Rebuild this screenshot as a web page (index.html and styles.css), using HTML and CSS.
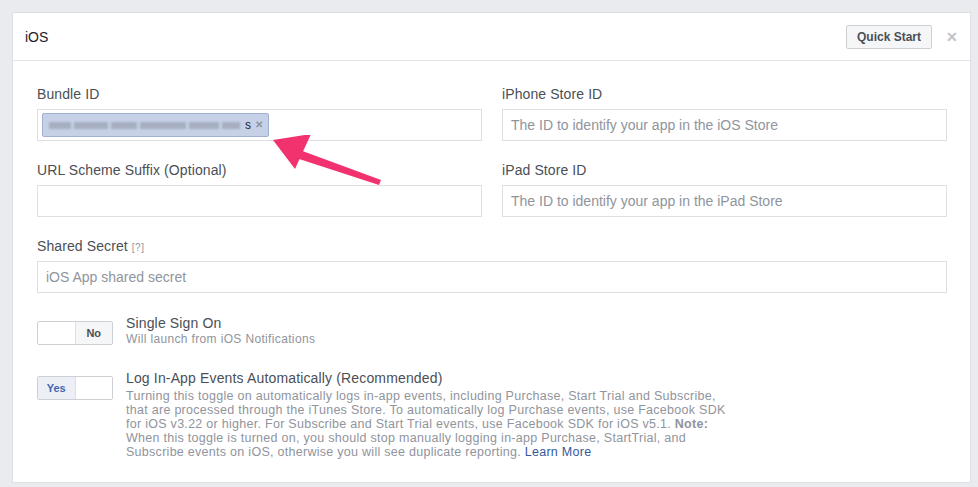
FILE: index.html
```html
<!DOCTYPE html>
<html>
<head>
<meta charset="utf-8">
<link rel="stylesheet" href="styles.css">
</head>
<body>
<div class="card">
  <div class="card-header">
    <span class="title">iOS</span>
    <div class="header-actions">
      <button class="btn">Quick Start</button>
      <span class="close">&#x2715;</span>
    </div>
  </div>
  <div class="card-body">
    <div class="grid">
      <div class="field">
        <label class="label">Bundle ID</label>
        <div class="input token-input">
          <span class="token">
            <span class="blur">
              <i class="b1"></i><i class="b2"></i><i class="b3"></i><i class="b4"></i><i class="b5"></i><i class="b6"></i>
            </span>
            <span class="token-s">s</span>
            <span class="token-x">&#x2715;</span>
          </span>
        </div>
      </div>
      <div class="field">
        <label class="label">iPhone Store ID</label>
        <div class="input placeholder">The ID to identify your app in the iOS Store</div>
      </div>
      <div class="field">
        <label class="label">URL Scheme Suffix (Optional)</label>
        <div class="input"></div>
      </div>
      <div class="field">
        <label class="label">iPad Store ID</label>
        <div class="input placeholder">The ID to identify your app in the iPad Store</div>
      </div>
      <div class="field wide">
        <label class="label">Shared Secret <span class="help">[?]</span></label>
        <div class="input placeholder">iOS App shared secret</div>
      </div>
    </div>

    <div class="option first">
      <div class="toggle">
        <span class="half"></span>
        <span class="half off">No</span>
      </div>
      <div class="option-text">
        <div class="option-title">Single Sign On</div>
        <div class="option-desc">Will launch from iOS Notifications</div>
      </div>
    </div>

    <div class="option">
      <div class="toggle">
        <span class="half on">Yes</span>
        <span class="half"></span>
      </div>
      <div class="option-text">
        <div class="option-title">Log In-App Events Automatically (Recommended)</div>
        <div class="option-desc long">Turning this toggle on automatically logs in-app events, including Purchase, Start Trial and Subscribe, that are processed through the iTunes Store. To automatically log Purchase events, use Facebook SDK for iOS v3.22 or higher. For Subscribe and Start Trial events, use Facebook SDK for iOS v5.1. <b>Note:</b> When this toggle is turned on, you should stop manually logging in-app Purchase, StartTrial, and Subscribe events on iOS, otherwise you will see duplicate reporting. <a href="#">Learn More</a></div>
      </div>
    </div>
  </div>

  <svg class="arrow" width="130" height="70" viewBox="0 0 130 70">
    <polygon points="0,5 38,-1 22,34" fill="#f2316f"/>
    <polygon points="24,14 108,45 106,50 20,22" fill="#f2316f"/>
  </svg>
</div>
</body>
</html>
```

FILE: styles.css
```css
* { box-sizing: border-box; }
html, body { margin: 0; padding: 0; }
body {
  background: #e9ebee;
  font-family: "Liberation Sans", Arial, sans-serif;
  color: #4b4f56;
  padding: 12px 7px 5px 12px;
}
.card {
  position: relative;
  background: #fff;
  border: 1px solid #dddfe2;
  width: 959px;
  height: 471px;
}
.card-header {
  height: 48px;
  border-bottom: 1px solid #e5e5e5;
  display: flex;
  align-items: center;
  justify-content: space-between;
  padding: 0 12px 0 12px;
}
.title {
  font-size: 14px;
  color: #1d2129;
}
.header-actions {
  display: flex;
  align-items: center;
  gap: 14px;
}
.btn {
  font-family: inherit;
  font-size: 12px;
  font-weight: bold;
  color: #4b4f56;
  background: #f5f6f7;
  border: 1px solid #ccd0d5;
  border-radius: 2px;
  height: 24px;
  width: 86px;
  padding: 0;
}
.close {
  color: #bec2c9;
  font-size: 14px;
  font-weight: bold;
  width: 12px;
  line-height: 14px;
}
.card-body {
  padding: 24px 24px 0 24px;
}
.grid {
  display: grid;
  grid-template-columns: 445px 445px;
  column-gap: 20px;
  row-gap: 20px;
}
.field.wide { grid-column: 1 / span 2; }
.label {
  display: block;
  font-size: 14px;
  line-height: 18px;
  height: 18px;
  color: #4b4f56;
  margin-bottom: 6px;
  letter-spacing: 0.1px;
}
.help {
  font-size: 10px;
  line-height: 10px;
  color: #90949c;
  letter-spacing: 0.5px;
}
.input {
  height: 32px;
  border: 1px solid #dddfe2;
  font-size: 14px;
  line-height: 30px;
  padding: 0 8px;
}
.placeholder { color: #90949c; }
.token-input {
  padding: 3px 4px;
}
.token {
  display: flex;
  align-items: center;
  width: 227px;
  height: 24px;
  background: #c6d1e7;
  border: 1px solid #9fb1d3;
  border-radius: 2px;
  padding: 0 5px 0 6px;
}
.blur {
  display: flex;
  align-items: center;
  gap: 3px;
  flex: 1;
  height: 10px;
  filter: blur(1.3px);
  overflow: hidden;
}
.blur i {
  display: block;
  height: 7px;
  background: #98a0ae;
  opacity: 0.7;
  flex: none;
}
.b1 { width: 22px; }
.b2 { width: 34px; }
.b3 { width: 26px; }
.b4 { width: 46px; }
.b5 { width: 30px; }
.b6 { width: 18px; }
.token-s {
  font-size: 12px;
  color: #1d2129;
  line-height: 22px;
  margin-left: 1px;
}
.token-x {
  font-size: 10px;
  color: #8d949e;
  font-weight: bold;
  margin-left: 4px;
}
.option {
  display: flex;
  align-items: flex-start;
  gap: 13px;
  margin-top: 23px;
}
.option.first { margin-top: 22px; }
.toggle {
  display: flex;
  width: 76px;
  height: 24px;
  border: 1px solid #ccd0d5;
  border-radius: 2px;
  margin-top: 6px;
  overflow: hidden;
  flex: none;
}
.half {
  flex: 1;
  display: flex;
  align-items: center;
  justify-content: center;
  font-size: 11px;
  font-weight: bold;
}
.half.off {
  background: #f5f6f7;
  border-left: 1px solid #dddfe2;
  color: #4b4f56;
}
.half.on {
  background: #eceff5;
  border-right: 1px solid #dddfe2;
  color: #4267b2;
}
.option-title {
  font-size: 14px;
  line-height: 16px;
  color: #4b4f56;
  letter-spacing: 0.15px;
}
.option-desc {
  font-size: 12px;
  line-height: 16px;
  color: #90949c;
  letter-spacing: 0.35px;
}
.option-desc.long {
  width: 602px;
  font-size: 12.5px;
  line-height: 14px;
  margin-top: 3px;
  letter-spacing: 0.28px;
}
.option-desc b {
  font-weight: bold;
  color: #90949c;
}
.option-desc a {
  color: #365899;
  text-decoration: none;
}
.arrow {
  position: absolute;
  left: 260px;
  top: 122px;
}
```
